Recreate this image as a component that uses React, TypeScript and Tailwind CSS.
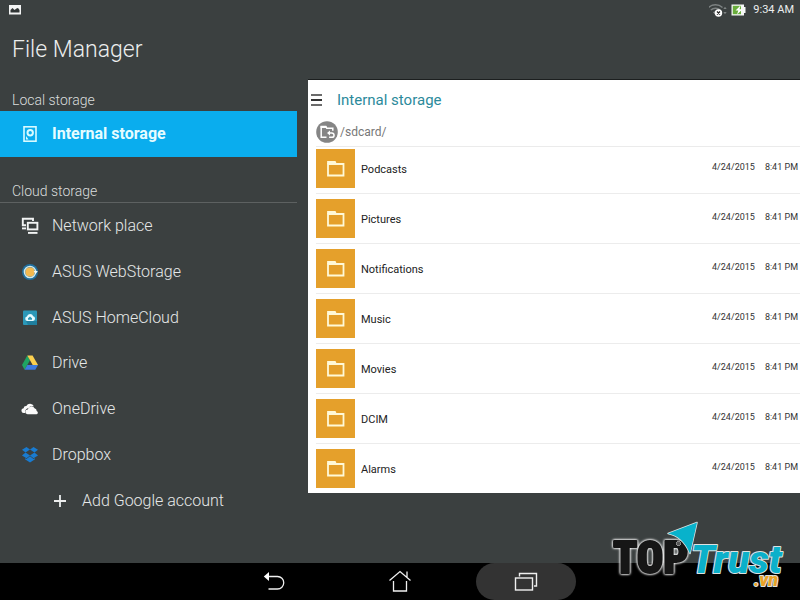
import React, { useState } from 'react';

const places = [
  { name: 'Network place', icon: <NetworkIcon /> },
  { name: 'ASUS WebStorage', icon: <WebStorageIcon /> },
  { name: 'ASUS HomeCloud', icon: <HomeCloudIcon /> },
  { name: 'Drive', icon: <DriveIcon /> },
  { name: 'OneDrive', icon: <OneDriveIcon /> },
  { name: 'Dropbox', icon: <DropboxIcon /> },
];

const folders = ['Podcasts', 'Pictures', 'Notifications', 'Music', 'Movies', 'DCIM', 'Alarms'].map((name) => ({
  name,
  date: '4/24/2015',
  time: '8:41 PM',
}));

function StorageIcon() {
  return (
    <svg width="16" height="18" viewBox="0 0 16 18" fill="none" stroke="#d9fbff">
      <rect x="2" y="1.8" width="12" height="14.400" strokeWidth="1.600" />
      <circle cx="8.200" cy="7.800" r="2.700" strokeWidth="2" />
      <path d="m4 11 2.500 3.500H4z" fill="#d9fbff" stroke="none" />
    </svg>
  );
}

function NetworkIcon() {
  return (
    <svg width="18" height="18" viewBox="0 0 18 18" fill="none" stroke="#f2f4f4" strokeWidth="1.900">
      <path d="M12 4V1.800H1.800v6.400H5" />
      <path d="M1 11.400h4" />
      <rect x="6.800" y="5.800" width="9.600" height="6.600" />
      <path d="M7 15.900h9.500" />
    </svg>
  );
}

function WebStorageIcon() {
  return (
    <svg width="18" height="18" viewBox="0 0 18 18">
      <circle cx="9" cy="9" r="8" fill="#1f6f9f" />
      <circle cx="9" cy="9" r="4.800" fill="#f3b94f" />
      <circle cx="9" cy="9" r="5.600" fill="none" stroke="#d5e9ea" strokeWidth="1.400" />
      <path d="M12.600 8h4.200l-2.100 3z" fill="#f2fbfb" />
    </svg>
  );
}

function HomeCloudIcon() {
  return (
    <svg width="18" height="18" viewBox="0 0 18 18">
      <rect x="2" y="1.500" width="14" height="14.500" rx="1" fill="#2b98b8" />
      <path d="M8 12h8v3a1 1 0 0 1-1 1H7l-2-4z" fill="#1f7f9f" />
      <path d="M6.300 12a2.300 2.300 0 0 1-.4-4.500 3.300 3.300 0 0 1 6.300-.2A2.400 2.400 0 0 1 12 12z" fill="#e6fbff" />
      <path d="m9 7.600 2 1.700v1.400H7V9.300z" fill="#2b98b8" />
    </svg>
  );
}

function DriveIcon() {
  return (
    <svg width="18" height="18" viewBox="0 0 18 18">
      <path d="M6.300 1.500 1 11l2.600 4.800L9 6.300z" fill="#1fa463" />
      <path d="M6.300 1.500h5.300L17 11h-5.300z" fill="#fbd04f" />
      <path d="M6.300 11H17l-2.700 4.800H3.600z" fill="#3d7be0" />
    </svg>
  );
}

function OneDriveIcon() {
  return (
    <svg width="18" height="18" viewBox="0 0 18 18" fill="#fafafa">
      <path d="M4.200 13H3a2.400 2.400 0 0 1-.4-4.800 2.500 2.500 0 0 1 2.700-2.300 4.300 4.300 0 0 1 7.600.4 4 4 0 0 0-5.400 2C5.300 8.300 3.700 10.500 4.200 13z" />
      <path d="M6.600 14.300a2.400 2.400 0 0 1 .2-4.900 3.600 3.600 0 0 1 6.700-1.200 2.700 2.700 0 0 1 2.200 2.700 1.800 1.800 0 0 1-.1 3.400z" />
    </svg>
  );
}

function DropboxIcon() {
  return (
    <svg width="18" height="18" viewBox="0 0 18 18" fill="#197bd0">
      <path d="M5.500 1 9 3.600 4.500 6.400 1 3.700z" />
      <path d="M12.500 1 9 3.600l4.500 2.800L17 3.700z" />
      <path d="M4.500 6.600 9 9.400l-3.500 2.800L1 9.400z" />
      <path d="M13.500 6.600 9 9.400l3.500 2.800L17 9.400z" />
      <path d="M9 10.300l3.600 2.700 1.400-.8v1.100l-5 3.300-5-3.300v-1.100l1.400.8z" />
    </svg>
  );
}

function FolderIcon() {
  return (
    <svg width="20" height="18" viewBox="0 0 20 18" fill="none">
      <path d="M2 15.500V4h15.500v11.500z" stroke="#fff9d8" strokeWidth="1.800" />
      <path d="M1.100 1h8.400l1.300 3H1.100z" fill="#fff9d8" />
    </svg>
  );
}

function FolderUpIcon() {
  return (
    <svg width="22" height="22" viewBox="0 0 22 22" fill="none">
      <circle cx="11" cy="11" r="10.800" fill="#858585" />
      <path d="M10.500 16.300H5.200V5.600h4.600l1 1.700h6v2.400" stroke="#fff" strokeWidth="1.500" />
      <path d="M4.600 5h5.600l.8 2H4.600z" fill="#fff" />
      <path d="M12.500 12h3.400a2.100 2.100 0 0 1 0 4.300h-2.800" stroke="#fff" strokeWidth="1.500" />
      <path d="m14 9.600-3 2.400 3 2.400z" fill="#fff" />
    </svg>
  );
}

function StatusBar() {
  return (
    <header className="flex h-5 items-center justify-between pr-1.5 pl-2">
      <svg width="14" height="12" viewBox="0 0 14 12">
        <rect x="1" y="1" width="12" height="9.500" fill="#f3f4f4" />
        <path d="M2.500 8.500V6l2-2 2 2 2-1.500 1.500-.500 1.500 2v2.500z" fill="#303535" />
      </svg>
      <div className="flex items-center">
        <svg width="40" height="16" viewBox="0 0 40 16" fill="none">
          <path d="M-.5 5.500a10.500 10.500 0 0 1 14 0" stroke="#7d8282" strokeWidth="1.500" />
          <path d="M1.800 8a7 7 0 0 1 9.400 0" stroke="#7d8282" strokeWidth="1.500" />
          <path d="M4 10.300a4 4 0 0 1 5 0L6.500 13z" fill="#8d9292" />
          <circle cx="9.500" cy="11" r="3.700" fill="#fff" />
          <path d="m8 9.500 3 3m0-3-3 3" stroke="#222" strokeWidth="1.200" />
          <path d="m14.300 7 1.700-2.300L17.700 7zM14.300 10l1.700 2.300 1.700-2.300z" fill="#7d8282" />
          <path d="M22.500 2.500H35v2.500h1.500v6H35v2.500H22.500z" fill="#f5f7f5" />
          <path d="M23.800 3.800H32v8.400h-8.200z" fill="#69ad3c" />
          <path d="m31.500 3.500-5 5h2.800L28 12.500l5.500-5.300h-3z" fill="#fff" />
        </svg>
        <span className="ml-1 text-[11px] text-[#eceeee]">9:34 AM</span>
      </div>
    </header>
  );
}

function Logo() {
  return (
    <svg
      className="absolute right-2 bottom-1"
      width="184"
      height="80"
      viewBox="608 516 184 80"
      fontWeight="900"
      strokeLinejoin="round"
      paintOrder="stroke"
      role="img"
      aria-label="TOP Trust .vn"
    >
      <g className="drop-shadow-[0_0_1px_#ffffff]">
        <text
          className="drop-shadow-[0_0_1px_#ffffff]"
          x="613"
          y="573"
          fontSize="44"
          fontFamily="'Liberation Sans Narrow', 'Roboto Condensed', sans-serif"
          fill="#161616"
          stroke="#161616"
          strokeWidth="2"
        >
          TOP
        </text>
      </g>
      <g stroke="#dde1e1" strokeWidth="2">
        <path d="M697 522.500 668 533.500c10 2 17 8 22 20z" fill="#08b2cb" strokeWidth="1.500" />
        <text x="691" y="573" fontSize="39" fontStyle="italic" fontFamily="Roboto, sans-serif" fill="#0bb0ca">
          Trust
        </text>
        <text x="754" y="586" fontSize="18" fontStyle="italic" fontFamily="Roboto, sans-serif" fill="#e9a227">
          .vn
        </text>
      </g>
      <circle cx="678.500" cy="543.500" r="2" fill="#555" stroke="#ddd" strokeWidth="1" />
    </svg>
  );
}

const App: React.FC = () => {
  const [selected, setSelected] = useState('Internal storage');

  const rowColor = (name: string) =>
    selected === name ? 'bg-[#0aadee] font-bold text-[#e6fcff]' : 'font-light text-[#e6e8e8]';

  return (
    <div className="relative flex min-h-screen flex-col bg-[#3b4040] font-['Roboto',sans-serif]">
      <StatusBar />
      <h1 className="mt-3.5 pl-3 text-[23px] leading-8 font-light text-[#eceeee]">File Manager</h1>

      <div className="mt-[13px] flex">
        <aside className="w-[297px] shrink-0 pt-px">
          <h2 className="mt-2 h-[23px] pl-3 text-sm leading-6 font-light text-[#dadddd]">Local storage</h2>
          <button
            onClick={() => setSelected('Internal storage')}
            className={`flex h-[46px] w-full items-center gap-3.5 pl-[22px] text-base ${rowColor('Internal storage')}`}
          >
            <StorageIcon />
            Internal storage
          </button>
          <h2 className="mt-[22px] h-6 border-b border-[#5d6161] pl-3 text-sm leading-6 font-light text-[#dadddd]">
            Cloud storage
          </h2>
          <nav className="grid h-[321px] auto-rows-fr">
            {places.map((place) => (
              <button
                key={place.name}
                onClick={() => setSelected(place.name)}
                className={`flex items-center gap-[13px] pl-[21px] text-base ${rowColor(place.name)}`}
              >
                {place.icon}
                {place.name}
              </button>
            ))}
            <button className="flex items-center gap-[15px] pl-[53px] text-base font-light text-[#e6e8e8]">
              <svg width="14" height="14" viewBox="0 0 14 14" stroke="#eceeee" strokeWidth="1.800">
                <path d="M7 1v12M1 7h12" />
              </svg>
              Add Google account
            </button>
          </nav>
        </aside>

        <main className="ml-[11px] h-fit flex-1 border-t border-[#1c1f1f] bg-white">
          <div className="mt-2 flex h-6 items-center gap-3.5">
            <button aria-label="Menu" className="pl-0.5">
              <svg width="13" height="14" viewBox="0 0 13 14" strokeWidth="2">
                <path d="M1 2h11M1 12h11" stroke="#6b6b6b" />
                <path d="M1 7h11" stroke="#333" />
              </svg>
            </button>
            <h2 className="text-[15px] text-[#2b8a9b]">Internal storage</h2>
          </div>
          <div className="mt-1.5 ml-2 flex h-[29px] items-center gap-0.5 border-b border-[#ebebeb]">
            <button aria-label="Up one folder">
              <FolderUpIcon />
            </button>
            <span className="text-xs text-[#777]">/sdcard/</span>
          </div>
          <ul className="pl-2">
            {folders.map((folder) => (
              <li
                key={folder.name}
                className="flex items-center border-t border-[#ececec] py-[5px] pr-0.5 first:border-t-0 first:pt-0.5"
              >
                <div className="flex h-[39px] w-[39px] items-center justify-center bg-[#e5a02b]">
                  <FolderIcon />
                </div>
                <span className="ml-1.5 flex-1 pt-[3px] text-[11px] text-[#222]">{folder.name}</span>
                <span className="pb-px text-[9px] text-[#333]">{folder.date}</span>
                <span className="ml-2.5 pb-px text-[9px] text-[#333]">{folder.time}</span>
              </li>
            ))}
          </ul>
        </main>
      </div>

      <footer className="mt-auto flex h-[37px] justify-center gap-[26px] bg-black">
        <button aria-label="Back" className="flex w-[100px] items-center justify-center">
          <svg width="22" height="22" viewBox="0 0 22 22" fill="none">
            <path d="M4 5.500h10.500a6 6 0 0 1 0 12.500H5.500" stroke="#f0f0f0" strokeWidth="1.300" />
            <path d="M6 1v9L.8 5.500z" fill="#fff" />
          </svg>
        </button>
        <button aria-label="Home" className="flex w-[100px] items-center justify-center">
          <svg width="24" height="24" viewBox="0 0 24 24" fill="none" stroke="#f0f0f0" strokeWidth="1.300">
            <path d="M1.500 10.500 12 1.500l10.500 9M19 7V1.500" />
            <path d="M5.500 11v10h13V11" />
          </svg>
        </button>
        <button aria-label="Recent apps" className="flex w-[100px] items-center justify-center rounded-full bg-[#333333]">
          <svg width="24" height="20" viewBox="0 0 24 20" fill="none" stroke="#f0f0f0" strokeWidth="1.400">
            <path d="M5.500 4.500V1.500h17V14H20" />
            <rect x="1.500" y="6" width="17" height="12" />
          </svg>
        </button>
      </footer>

      <Logo />
    </div>
  );
};

export default App;
